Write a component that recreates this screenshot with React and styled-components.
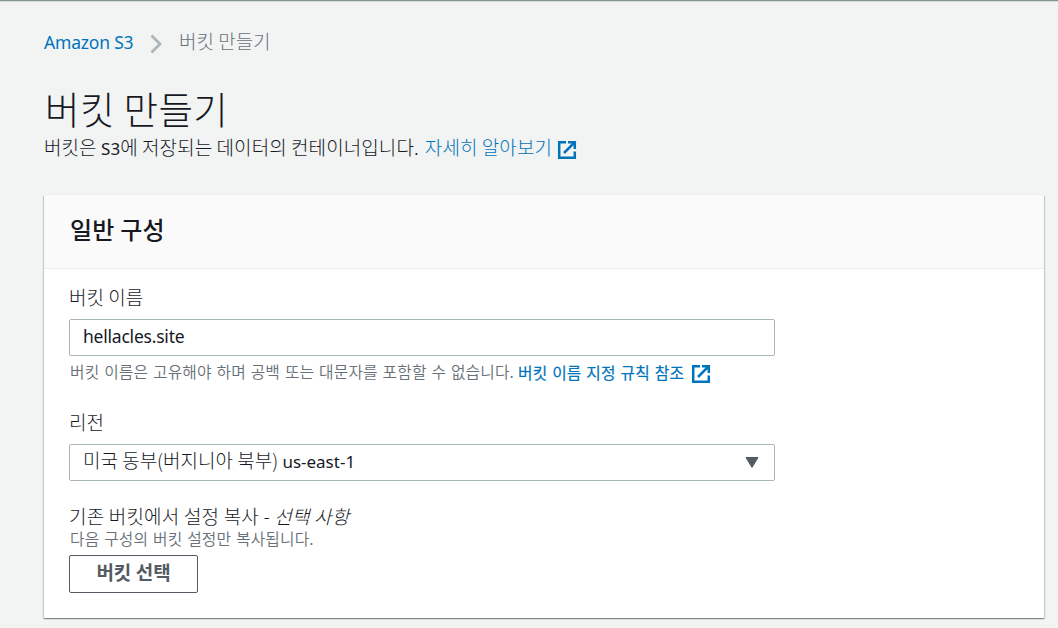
import React from "react";
import styled, { createGlobalStyle } from "styled-components";

const ExternalIcon = () => (
  <IconSvg viewBox="0 0 18 18">
    <path d="M8 1.2H1.2v15.6h15.6V10.5" />
    <path d="M10 1.2h6.8V8M16.8 1.2L6 12" />
  </IconSvg>
);

const Breadcrumb = () => (
  <BreadcrumbNav>
    <CrumbLink href="#">Amazon S3</CrumbLink>
    <Chevron viewBox="0 0 12 20">
      <path d="M1.5 1.5L10 10L1.5 18.5" />
    </Chevron>
    <CrumbCurrent>버킷 만들기</CrumbCurrent>
  </BreadcrumbNav>
);

const App = () => {
  return (
    <Page>
      <GlobalStyle />
      <Breadcrumb />
      <PageTitle>버킷 만들기</PageTitle>
      <Description>
        <span>
          버킷은 <Latin>S3</Latin>에 저장되는 데이터의 컨테이너입니다.
        </span>
        <Link href="#">자세히 알아보기</Link>
        <ExternalIcon />
      </Description>
      <Panel>
        <PanelHeader>
          <PanelTitle>일반 구성</PanelTitle>
        </PanelHeader>
        <PanelBody>
          <Label>버킷 이름</Label>
          <Input defaultValue="hellacles.site" />
          <Hint>
            <span>
              버킷 이름은 고유해야 하며 공백 또는 대문자를 포함할 수 없습니다.
            </span>
            <HintLink href="#">버킷 이름 지정 규칙 참조</HintLink>
            <ExternalIcon />
          </Hint>
          <RegionLabel>리전</RegionLabel>
          <Select type="button">
            <span>
              미국 동부(버지니아 북부) <Latin>us-east-1</Latin>
            </span>
            <Caret viewBox="0 0 14 11">
              <path d="M1 0.5h12L7 10.5z" />
            </Caret>
          </Select>
          <CopyLabel>
            기존 버킷에서 설정 복사 - <em>선택 사항</em>
          </CopyLabel>
          <CopyHint>다음 구성의 버킷 설정만 복사됩니다.</CopyHint>
          <Button type="button">버킷 선택</Button>
        </PanelBody>
      </Panel>
    </Page>
  );
};

export default App;

const GlobalStyle = createGlobalStyle`
  * {
    box-sizing: border-box;
  }
  body {
    margin: 0;
    background-color: #f2f3f3;
    color: #16191f;
    font-family: "Noto Sans CJK KR", sans-serif;
    font-weight: 300;
    font-size: 19px;
    overflow: hidden;
  }
`;
const Page = styled.main`
  height: 628px;
  padding: 26px 14px 0 44px;
  border-top: 1px solid #879596;
  box-shadow: inset 0 1px 0 #d5dbdb;
`;
const BreadcrumbNav = styled.nav`
  display: flex;
  align-items: center;
  height: 32px;
`;
const CrumbLink = styled.a`
  width: 106px;
  padding-bottom: 2px;
  color: #0073bb;
  font-family: "Noto Sans", sans-serif;
  font-size: 17.5px;
  font-weight: 400;
  letter-spacing: -0.2px;
  text-decoration: none;
`;
const Chevron = styled.svg`
  width: 12px;
  height: 20px;
  margin-top: 2px;
  fill: none;
  stroke: #aab7b8;
  stroke-width: 2.8;
`;
const CrumbCurrent = styled.span`
  margin: 0 0 5px 17px;
  color: #687078;
`;
const PageTitle = styled.h1`
  height: 50px;
  margin: 24px 0 0 1px;
  font-size: 37.5px;
  font-weight: 300;
  letter-spacing: 0.4px;
  line-height: 50px;
`;
const Description = styled.div`
  display: flex;
  align-items: center;
  height: 30px;
  padding-bottom: 4px;
  white-space: nowrap;
  letter-spacing: 0.08px;

  svg {
    margin: 7px 0 0 6px;
  }
`;
const Latin = styled.span`
  font-family: "Noto Sans", sans-serif;
  font-size: 17px;
  font-weight: 400;
`;
const Link = styled.a`
  margin-left: 6px;
  color: #0073bb;
  text-decoration: none;
`;
const IconSvg = styled.svg`
  width: 18px;
  height: 18px;
  flex-shrink: 0;
  overflow: visible;
  fill: none;
  stroke: #0073bb;
  stroke-width: 2.5;
`;
const Panel = styled.section`
  height: 423px;
  margin-top: 32px;
  background-color: #fff;
  box-shadow: 0 1px 1px 0 rgba(0, 28, 36, 0.3),
    1px 1px 1px 0 rgba(0, 28, 36, 0.15), -1px 1px 1px 0 rgba(0, 28, 36, 0.15),
    0 -1px 0 0 #eaeded;
`;
const PanelHeader = styled.header`
  height: 74px;
  padding: 0 26px;
  background-color: #fafafa;
  border-bottom: 1px solid #eaeded;
`;
const PanelTitle = styled.h2`
  margin: 0;
  font-size: 24px;
  font-weight: 500;
  letter-spacing: 0.2px;
  line-height: 68px;
`;
const PanelBody = styled.div`
  display: flex;
  flex-direction: column;
  align-items: flex-start;
  padding: 14px 25px 0;
  white-space: nowrap;
`;
const Label = styled.label`
  height: 36px;
  line-height: 28px;
`;
const Input = styled.input`
  width: 706px;
  height: 37px;
  padding: 0 13px 3px;
  border: 1px solid #aab7b8;
  border-radius: 2px;
  color: #16191f;
  font-family: "Noto Sans", sans-serif;
  font-size: 17.5px;
  letter-spacing: -0.22px;
  outline: none;
`;
const Hint = styled.div`
  display: flex;
  align-items: center;
  height: 34px;
  padding: 0 0 4px 1px;
  color: #687078;
  font-size: 15.8px;
  font-weight: 350;
  letter-spacing: 0.13px;
  word-spacing: 1.2px;

  svg {
    margin: 5px 0 0 8px;
  }
`;
const HintLink = styled.a`
  margin: 2px 0 0 4px;
  color: #0073bb;
  font-weight: 400;
  -webkit-text-stroke: 0.2px #0073bb;
  text-decoration: none;
`;
const RegionLabel = styled(Label)`
  height: 37px;
  margin-top: 17px;
  line-height: 30px;
`;
const Select = styled.button`
  display: flex;
  align-items: center;
  justify-content: space-between;
  width: 706px;
  height: 37px;
  padding: 0 15px 6px 13px;
  border: 1px solid #aab7b8;
  border-radius: 2px;
  background-color: #fff;
  color: #16191f;
  font: inherit;
`;
const Caret = styled.svg`
  width: 14px;
  height: 11px;
  margin-top: 5px;
  fill: #545b64;
  stroke: #545b64;
  stroke-linejoin: round;
`;
const CopyLabel = styled(Label)`
  height: 23px;
  margin-top: 22px;
  line-height: 25px;
  letter-spacing: 0.2px;
`;
const CopyHint = styled.div`
  height: 29px;
  padding-left: 1px;
  color: #687078;
  font-size: 15.8px;
  font-weight: 350;
  line-height: 26px;
  letter-spacing: 0.13px;
  word-spacing: 1.2px;
`;
const Button = styled.button`
  width: 129px;
  height: 38px;
  padding: 0 0 5px;
  border: 1px solid #545b64;
  border-radius: 2px;
  background-color: #fff;
  color: #545b64;
  font: inherit;
  font-weight: 700;
`;
